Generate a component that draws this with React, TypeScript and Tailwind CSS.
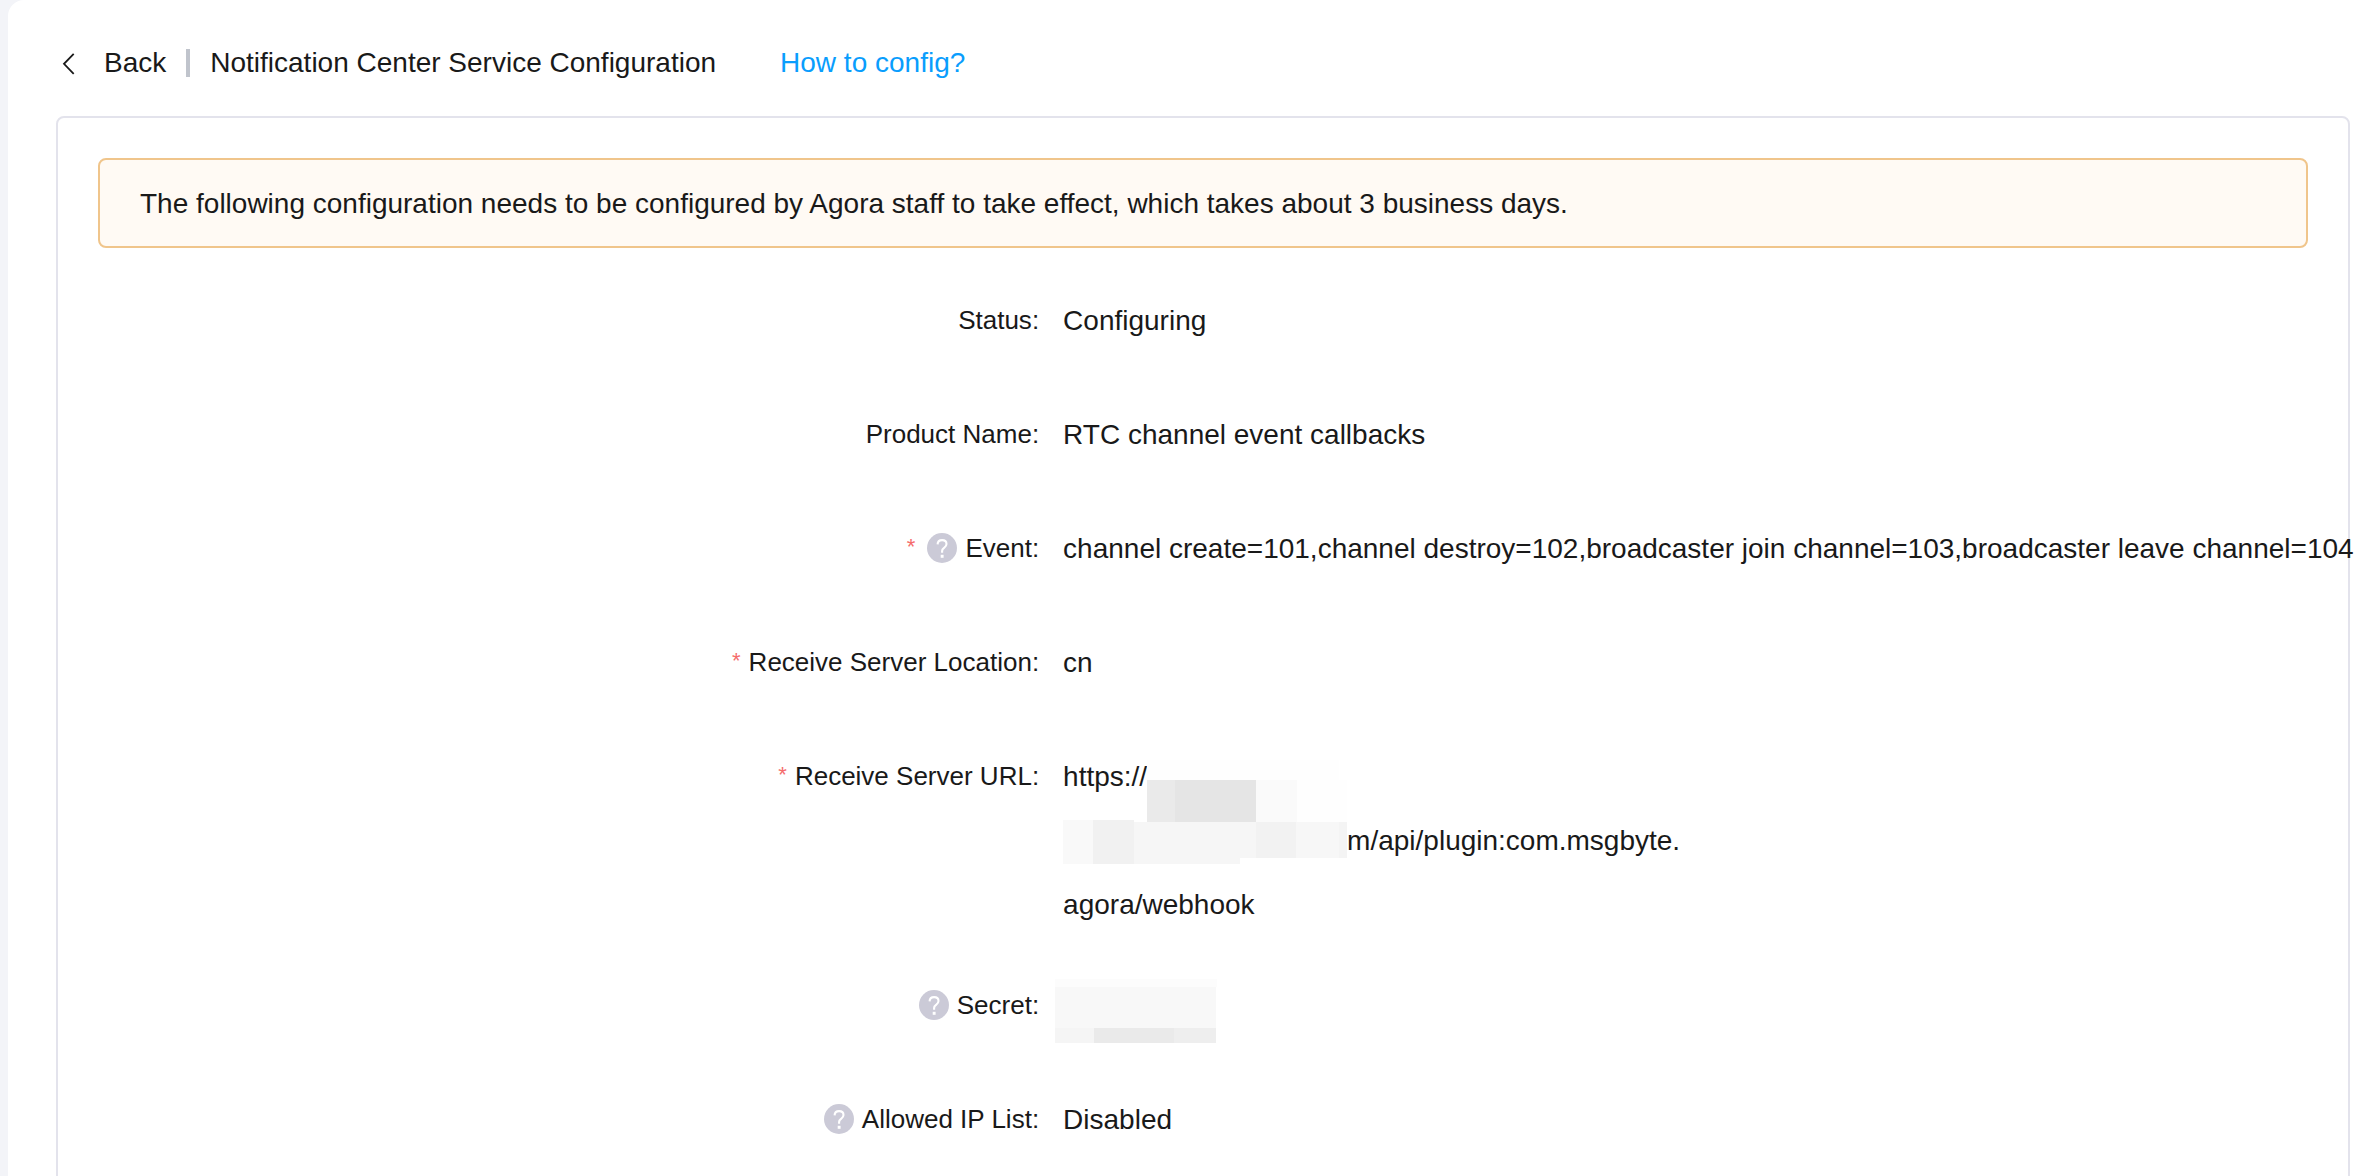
import type { ReactNode } from "react";

function HelpIcon({ topic }: { topic: string }) {
  return (
    <button type="button" aria-label={`About ${topic}`} className="mr-2 size-[30px] shrink-0">
      <svg viewBox="0 0 30 30" className="block size-full" fill="none">
        <circle cx="15" cy="15" r="15" fill="#cbcad7" />
        <path
          d="M10.6 11.4C10.700 8.600 12.500 7.100 15.100 7.100c2.600 0 4.400 1.600 4.400 3.900 0 1.700-.9 2.600-2.200 3.600-1.500 1.100-2.200 1.900-2.200 3.500v1.600"
          stroke="#fff"
          strokeWidth="2.100"
        />
        <rect x="13.700" y="21.800" width="2.900" height="3" fill="#fff" />
      </svg>
    </button>
  );
}

type RowProps = {
  label: string;
  required?: boolean;
  help?: boolean;
  children: ReactNode;
};

function Row({ label, required, help, children }: RowProps) {
  return (
    <div className="grid min-h-[78px] grid-cols-[43fr_57fr] items-start gap-x-6">
      <dt className="flex h-16 items-center justify-end whitespace-nowrap text-[26px]">
        {required && (
          <span className={help ? "mr-3 pb-1 text-[22px] text-[#f56c6c]" : "mr-2 pb-1 text-[22px] text-[#f56c6c]"}>
            *
          </span>
        )}
        {help && <HelpIcon topic={label} />}
        {label}:
      </dt>
      <dd className="relative min-w-0 pt-px whitespace-nowrap leading-[64px]">{children}</dd>
    </div>
  );
}

function UrlMosaic() {
  return (
    <svg
      aria-hidden="true"
      className="absolute top-0 left-0 h-[122px] w-[286px]"
      viewBox="0 0 286 122"
      shapeRendering="crispEdges"
    >
      <rect x="84" y="16" width="192" height="20" fill="#fefefe" />
      <rect x="84" y="36" width="28" height="42" fill="#eaeaea" />
      <rect x="112" y="36" width="81" height="42" fill="#e5e5e5" />
      <rect x="193" y="36" width="41" height="42" fill="#fafafa" />
      <rect x="234" y="36" width="50" height="42" fill="#fefefe" />
      <rect x="0" y="76" width="30" height="44" fill="#f9f9f9" />
      <rect x="30" y="76" width="41" height="44" fill="#f1f1f1" />
      <rect x="71" y="78" width="106" height="42" fill="#f6f6f6" />
      <rect x="177" y="78" width="16" height="36" fill="#f6f6f6" />
      <rect x="193" y="78" width="40" height="36" fill="#f2f2f2" />
      <rect x="233" y="78" width="43" height="36" fill="#f7f7f7" />
      <rect x="276" y="78" width="8" height="36" fill="#f4f4f4" />
    </svg>
  );
}

function SecretMosaic() {
  return (
    <svg
      role="img"
      aria-label="Hidden"
      className="-ml-2 mt-1 block h-[66px] w-[164px]"
      viewBox="0 0 164 66"
      shapeRendering="crispEdges"
    >
      <rect x="0" y="1" width="162" height="8" fill="#fcfcfc" />
      <rect x="0" y="9" width="161" height="41" fill="#f8f8f8" />
      <rect x="0" y="50" width="39" height="15" fill="#f5f5f5" />
      <rect x="39" y="50" width="80" height="15" fill="#eaeaea" />
      <rect x="119" y="50" width="42" height="15" fill="#eeeeee" />
    </svg>
  );
}

export default function App() {
  return (
    <div className="h-screen overflow-hidden bg-[#f3f4f8] pl-2 font-['Helvetica_Neue','Liberation_Sans',sans-serif] text-[28px] text-[#191919]">
      <main className="min-h-full rounded-tl-2xl bg-white pr-[10px] pl-12">
        <header className="flex h-[116px] items-center pt-[10px] whitespace-nowrap">
          <button type="button" className="flex items-center gap-7">
            <svg viewBox="0 0 16 24" className="ml-1 h-6 w-4" fill="none" stroke="#191919" strokeWidth="1.800">
              <path d="M13.700 2.800 4 12.800l9.700 10" />
            </svg>
            Back
          </button>
          <span className="mx-5 h-7 w-1 bg-[#c0c4cc]" />
          <h1>Notification Center Service Configuration</h1>
          <a href="#how-to-config" className="ml-16 text-[#099dfd]">
            How to config?
          </a>
        </header>

        <section className="min-h-[1100px] rounded-lg border-2 border-[#e3e3ec] p-10">
          <p className="rounded-lg border-2 border-[#f0c58b] bg-[#fffaf4] px-10 pt-0.5 leading-[84px]">
            The following configuration needs to be configured by Agora staff to take effect, which takes about 3
            business days.
          </p>
          <dl className="mt-10 flex flex-col gap-9 pl-0.5">
            <Row label="Status">Configuring</Row>
            <Row label="Product Name">RTC channel event callbacks</Row>
            <Row label="Event" required help>
              channel create=101,channel destroy=102,broadcaster join channel=103,broadcaster leave channel=104
            </Row>
            <Row label="Receive Server Location" required>
              cn
            </Row>
            <Row label="Receive Server URL" required>
              https://
              <br />
              <span className="inline-block w-[284px]" />
              m/api/plugin:com.msgbyte.
              <br />
              agora/webhook
              <UrlMosaic />
            </Row>
            <Row label="Secret" help>
              <SecretMosaic />
            </Row>
            <Row label="Allowed IP List" help>
              Disabled
            </Row>
          </dl>
        </section>
      </main>
    </div>
  );
}
